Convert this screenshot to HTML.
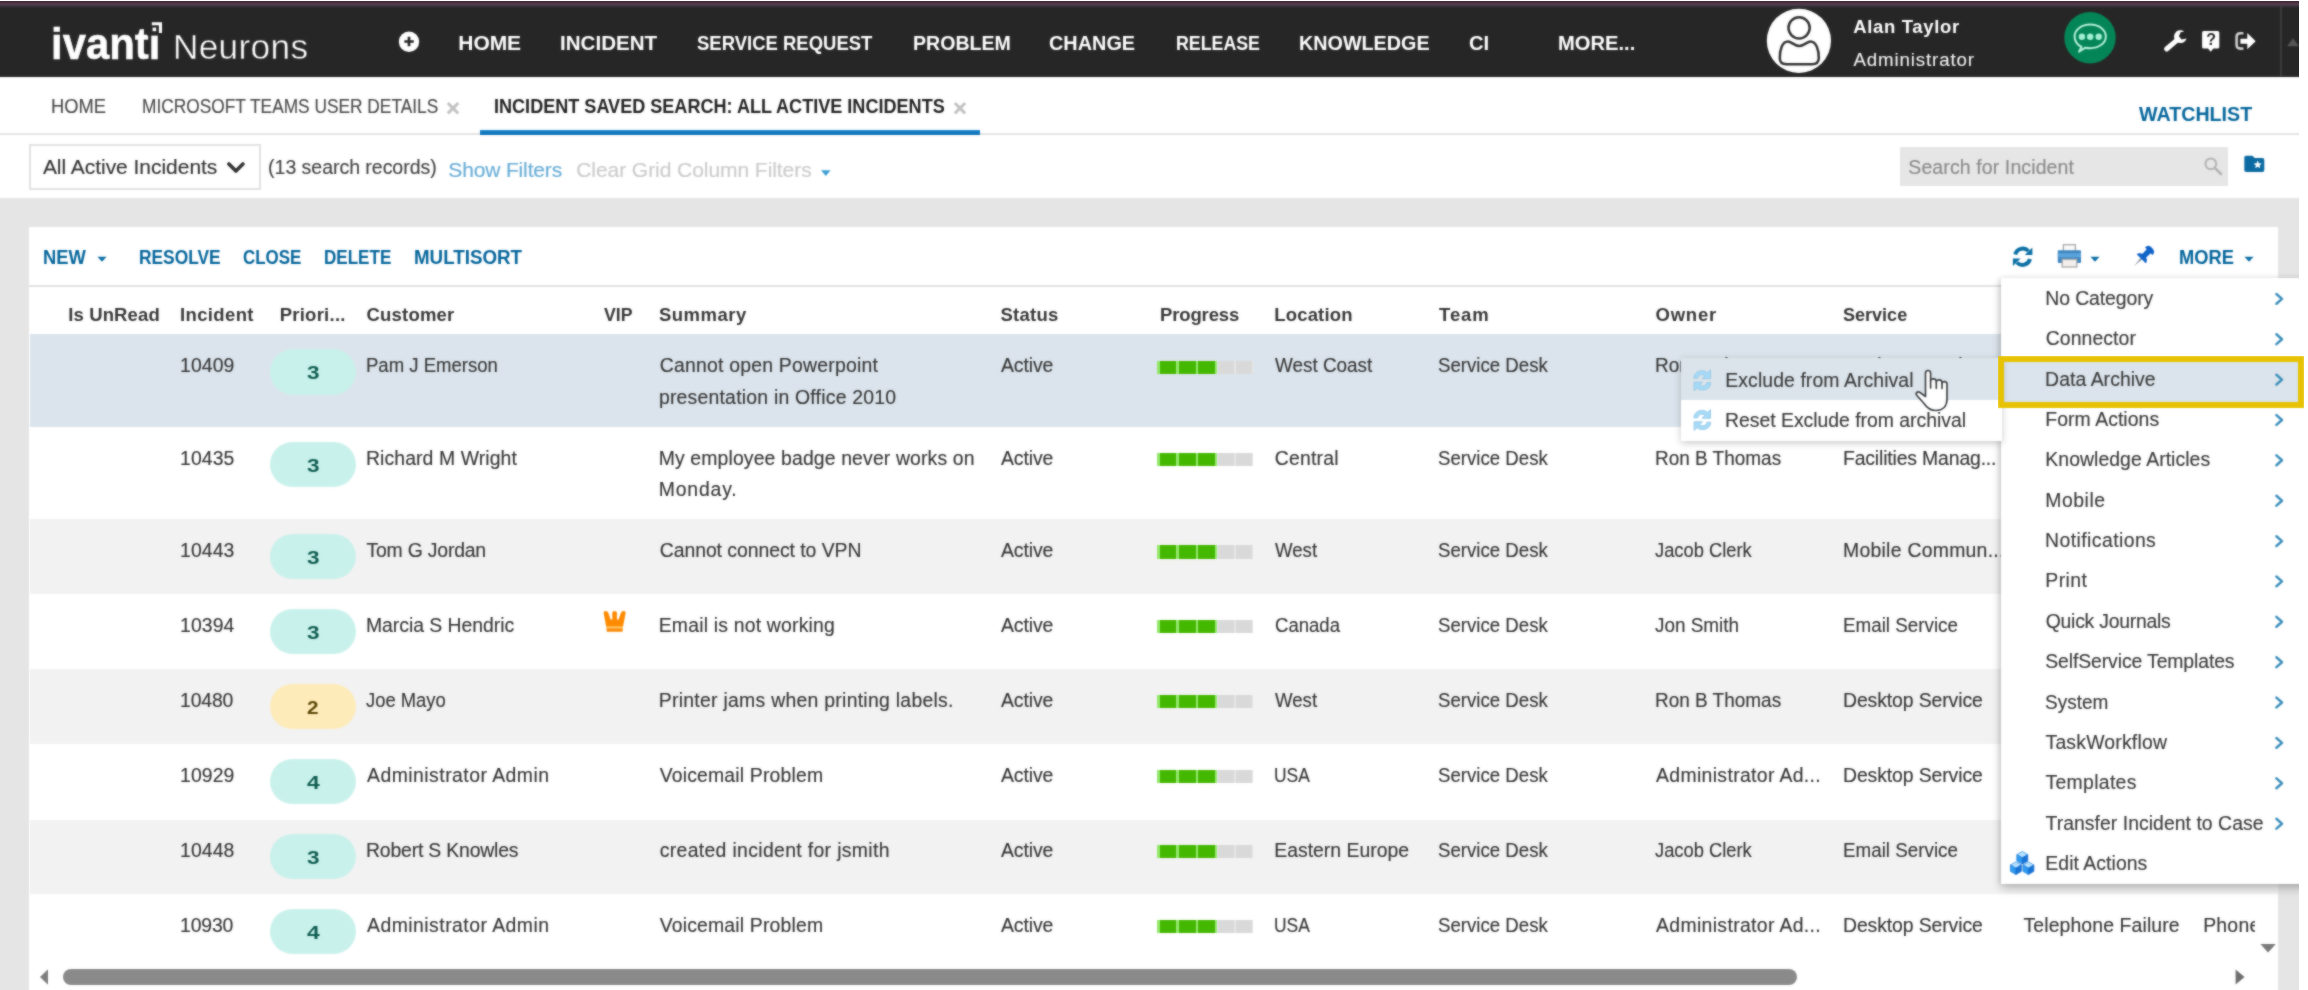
<!DOCTYPE html>
<html lang="en"><head><meta charset="utf-8"><title>Incident Saved Search: All Active Incidents</title>
<style>
*{box-sizing:border-box;margin:0;padding:0}
html,body{width:2308px;height:990px;overflow:hidden;background:#fff}
body{font-family:"Liberation Sans",sans-serif;position:relative}
.t{position:absolute;white-space:nowrap;display:block;transform-origin:0 50%}
.a{position:absolute;display:block}
#app{position:absolute;left:0;top:1px;width:2299px;height:989px;background:#e5e5e5;overflow:hidden}
#app>*, .abs{position:absolute}
#in{will-change:transform;filter:url(#soft);background:#e5e5e5}
.ov{filter:url(#soft)}
header{left:-20px;top:0;width:2339px;height:76px;background:#262626}
header .strip{left:0;top:0;width:100%;height:7px;background:linear-gradient(#40202f 0,#4e3444 25%,#523f50 55%,#2b2a30 85%,#262626 100%)}
.band{left:-20px;top:77px;width:2339px;height:120.6px;background:#fff}
.tabline{left:-20px;top:133px;width:2339px;height:2px;background:#e3e3e3}
.tabsel{left:479.8px;top:130px;width:500.3px;height:5px;background:linear-gradient(#2a90d6 0,#0f78c0 35%,#0f70b4 100%)}
.select{left:29px;top:144px;width:231.5px;height:45.5px;border:2px solid #e2e2e2;background:#fff}
.search{left:1899.8px;top:147px;width:328.4px;height:39.2px;background:#e6e6e6}
.panel{left:28.8px;top:227px;width:2249.4px;height:800px;background:#fff}
.tbline{left:28.8px;top:285px;width:2249.4px;height:2px;background:#e2e2e2}
.row{left:30.3px;width:2247.9px}
.badge{width:86px;height:45.2px;border-radius:23px;left:270px}
.pb{height:13.2px;left:1156.8px;width:96px}
.pb i{position:absolute;top:0;height:100%;display:block}
</style></head>
<body>
<svg width="0" height="0" style="position:absolute" aria-hidden="true"><filter id="soft" x="0" y="0" width="100%" height="100%" color-interpolation-filters="sRGB"><feGaussianBlur stdDeviation="0.8" result="b"/><feComposite in="SourceGraphic" in2="b" operator="arithmetic" k1="0" k2="0.45" k3="0.55" k4="0"/></filter></svg>
<div id="app">
<div class="abs" id="in" style="left:-20px;top:-21px;width:2339px;height:1030px"><div class="abs" style="left:20px;top:20px;width:2299px;height:990px">
<div class="abs" style="left:-20px;top:-20px;width:2339px;height:22px;background:#40202f"></div>
<header class="abs" style="top:1px"><div class="abs strip"></div></header>
<div class="abs band"></div><div class="abs tabline"></div><div class="abs tabsel"></div>
<div class="abs select"></div><div class="abs search"></div>
<div class="abs panel"></div><div class="abs tbline"></div>
<div class="abs" style="left:0;top:1px"><div class="a row" style="top:332.6px;height:93.4px;background:#dbe4ec"></div>
<div class="a badge" style="top:348.4px;background:#c9f1eb"></div>
<div class="a pb" style="top:359.6px;background:#e6e6e6"><i style="left:0;width:60px;background:#93e86c"></i><i style="left:3.5px;width:16.2px;background:#44b700"></i><i style="left:22.6px;width:16.2px;background:#44b700"></i><i style="left:41.7px;width:16.4px;background:#44b700"></i><i style="left:61.4px;width:15.6px;background:#d9d9d9"></i><i style="left:79.6px;width:15.6px;background:#d9d9d9"></i></div>
<div class="a row" style="top:426.0px;height:91.7px;background:#ffffff"></div>
<div class="a badge" style="top:440.8px;background:#c9f1eb"></div>
<div class="a pb" style="top:452.0px;background:#e6e6e6"><i style="left:0;width:60px;background:#93e86c"></i><i style="left:3.5px;width:16.2px;background:#44b700"></i><i style="left:22.6px;width:16.2px;background:#44b700"></i><i style="left:41.7px;width:16.4px;background:#44b700"></i><i style="left:61.4px;width:15.6px;background:#d9d9d9"></i><i style="left:79.6px;width:15.6px;background:#d9d9d9"></i></div>
<div class="a row" style="top:517.7px;height:75.2px;background:#f2f2f2"></div>
<div class="a badge" style="top:533.2px;background:#c9f1eb"></div>
<div class="a pb" style="top:544.4px;background:#e6e6e6"><i style="left:0;width:60px;background:#93e86c"></i><i style="left:3.5px;width:16.2px;background:#44b700"></i><i style="left:22.6px;width:16.2px;background:#44b700"></i><i style="left:41.7px;width:16.4px;background:#44b700"></i><i style="left:61.4px;width:15.6px;background:#d9d9d9"></i><i style="left:79.6px;width:15.6px;background:#d9d9d9"></i></div>
<div class="a row" style="top:592.9px;height:75.0px;background:#ffffff"></div>
<div class="a badge" style="top:608.1px;background:#c9f1eb"></div>
<div class="a pb" style="top:619.3px;background:#e6e6e6"><i style="left:0;width:60px;background:#93e86c"></i><i style="left:3.5px;width:16.2px;background:#44b700"></i><i style="left:22.6px;width:16.2px;background:#44b700"></i><i style="left:41.7px;width:16.4px;background:#44b700"></i><i style="left:61.4px;width:15.6px;background:#d9d9d9"></i><i style="left:79.6px;width:15.6px;background:#d9d9d9"></i></div>
<div class="a row" style="top:667.9px;height:75.3px;background:#f2f2f2"></div>
<div class="a badge" style="top:683.1px;background:#fdebb9"></div>
<div class="a pb" style="top:694.3px;background:#e6e6e6"><i style="left:0;width:60px;background:#93e86c"></i><i style="left:3.5px;width:16.2px;background:#44b700"></i><i style="left:22.6px;width:16.2px;background:#44b700"></i><i style="left:41.7px;width:16.4px;background:#44b700"></i><i style="left:61.4px;width:15.6px;background:#d9d9d9"></i><i style="left:79.6px;width:15.6px;background:#d9d9d9"></i></div>
<div class="a row" style="top:743.2px;height:75.4px;background:#ffffff"></div>
<div class="a badge" style="top:758.1px;background:#c9f1eb"></div>
<div class="a pb" style="top:769.3px;background:#e6e6e6"><i style="left:0;width:60px;background:#93e86c"></i><i style="left:3.5px;width:16.2px;background:#44b700"></i><i style="left:22.6px;width:16.2px;background:#44b700"></i><i style="left:41.7px;width:16.4px;background:#44b700"></i><i style="left:61.4px;width:15.6px;background:#d9d9d9"></i><i style="left:79.6px;width:15.6px;background:#d9d9d9"></i></div>
<div class="a row" style="top:818.6px;height:74.9px;background:#f2f2f2"></div>
<div class="a badge" style="top:833.0px;background:#c9f1eb"></div>
<div class="a pb" style="top:844.2px;background:#e6e6e6"><i style="left:0;width:60px;background:#93e86c"></i><i style="left:3.5px;width:16.2px;background:#44b700"></i><i style="left:22.6px;width:16.2px;background:#44b700"></i><i style="left:41.7px;width:16.4px;background:#44b700"></i><i style="left:61.4px;width:15.6px;background:#d9d9d9"></i><i style="left:79.6px;width:15.6px;background:#d9d9d9"></i></div>
<div class="a row" style="top:893.5px;height:75.5px;background:#ffffff"></div>
<div class="a badge" style="top:907.9px;background:#c9f1eb"></div>
<div class="a pb" style="top:919.1px;background:#e6e6e6"><i style="left:0;width:60px;background:#93e86c"></i><i style="left:3.5px;width:16.2px;background:#44b700"></i><i style="left:22.6px;width:16.2px;background:#44b700"></i><i style="left:41.7px;width:16.4px;background:#44b700"></i><i style="left:61.4px;width:15.6px;background:#d9d9d9"></i><i style="left:79.6px;width:15.6px;background:#d9d9d9"></i></div></div>
<nav><span class="t" style="left:51.34px;top:19px;font-size:44px;line-height:49px;font-weight:700;color:#ffffff;transform:scaleX(0.9517);-webkit-text-stroke:0.5px #fff;">ivanti</span>
<span class="t" style="left:172.90px;top:27px;font-size:35.3px;line-height:39px;color:#ffffff;letter-spacing:0.306px;-webkit-text-stroke:0.45px #262626;">Neurons</span><span class="t" style="left:458.30px;top:31px;font-size:21px;line-height:23px;font-weight:700;color:#ffffff;letter-spacing:-0.064px;">HOME</span>
<span class="t" style="left:560.02px;top:31px;font-size:21px;line-height:23px;font-weight:700;color:#ffffff;transform:scaleX(0.9793);">INCIDENT</span>
<span class="t" style="left:697.00px;top:31px;font-size:21px;line-height:23px;font-weight:700;color:#ffffff;transform:scaleX(0.8804);">SERVICE REQUEST</span>
<span class="t" style="left:912.67px;top:31px;font-size:21px;line-height:23px;font-weight:700;color:#ffffff;transform:scaleX(0.9313);">PROBLEM</span>
<span class="t" style="left:1049.00px;top:31px;font-size:21px;line-height:23px;font-weight:700;color:#ffffff;transform:scaleX(0.9462);">CHANGE</span>
<span class="t" style="left:1175.95px;top:31px;font-size:21px;line-height:23px;font-weight:700;color:#ffffff;transform:scaleX(0.8464);">RELEASE</span>
<span class="t" style="left:1299.36px;top:31px;font-size:21px;line-height:23px;font-weight:700;color:#ffffff;transform:scaleX(0.9404);">KNOWLEDGE</span>
<span class="t" style="left:1468.50px;top:31px;font-size:21px;line-height:23px;font-weight:700;color:#ffffff;transform:scaleX(0.9620);">CI</span>
<span class="t" style="left:1558.04px;top:31px;font-size:21px;line-height:23px;font-weight:700;color:#ffffff;transform:scaleX(0.9597);">MORE...</span><span class="t" style="left:1853.30px;top:16px;font-size:18.5px;line-height:21px;font-weight:700;color:#ffffff;letter-spacing:0.643px;">Alan Taylor</span>
<span class="t" style="left:1853.50px;top:49px;font-size:18.7px;line-height:21px;color:#f4f4f4;letter-spacing:0.862px;-webkit-text-stroke:0.1px;">Administrator</span></nav>
<div><span class="t" style="left:50.55px;top:95px;font-size:19.4px;line-height:22px;color:#4a4a4a;transform:scaleX(0.9452);-webkit-text-stroke:0.15px;">HOME</span>
<span class="t" style="left:142.11px;top:95px;font-size:19.4px;line-height:22px;color:#4a4a4a;transform:scaleX(0.8926);-webkit-text-stroke:0.15px;">MICROSOFT TEAMS USER DETAILS</span>
<span class="t" style="left:494.47px;top:95px;font-size:19.4px;line-height:22px;font-weight:700;color:#222;transform:scaleX(0.9318);">INCIDENT SAVED SEARCH: ALL ACTIVE INCIDENTS</span>
<span class="t" style="left:2138.50px;top:102px;font-size:20.5px;line-height:23px;font-weight:700;color:#04659b;transform:scaleX(0.9585);">WATCHLIST</span><span class="t" style="left:42.90px;top:155px;font-size:21px;line-height:23px;color:#333;letter-spacing:-0.034px;-webkit-text-stroke:0.15px;">All Active Incidents</span>
<span class="t" style="left:268.10px;top:156px;font-size:19.5px;line-height:22px;color:#444;letter-spacing:-0.026px;-webkit-text-stroke:0.15px;">(13 search records)</span>
<span class="t" style="left:448.30px;top:158px;font-size:21px;line-height:23px;color:#68add6;letter-spacing:-0.148px;-webkit-text-stroke:0.15px;">Show Filters</span>
<span class="t" style="left:576.20px;top:158px;font-size:21px;line-height:23px;color:#cbcbcb;letter-spacing:-0.058px;-webkit-text-stroke:0.15px;">Clear Grid Column Filters</span>
<span class="t" style="left:1908.30px;top:156px;font-size:19.5px;line-height:22px;color:#8a8a8a;letter-spacing:0.108px;-webkit-text-stroke:0.15px;">Search for Incident</span></div>
<div><span class="t" style="left:43.06px;top:246px;font-size:19.5px;line-height:22px;font-weight:700;color:#04659b;transform:scaleX(0.9404);">NEW</span>
<span class="t" style="left:138.61px;top:246px;font-size:19.5px;line-height:22px;font-weight:700;color:#04659b;transform:scaleX(0.8905);">RESOLVE</span>
<span class="t" style="left:243.30px;top:246px;font-size:19.5px;line-height:22px;font-weight:700;color:#04659b;transform:scaleX(0.8695);">CLOSE</span>
<span class="t" style="left:324.23px;top:246px;font-size:19.5px;line-height:22px;font-weight:700;color:#04659b;transform:scaleX(0.8746);">DELETE</span>
<span class="t" style="left:414.04px;top:246px;font-size:19.5px;line-height:22px;font-weight:700;color:#04659b;transform:scaleX(0.9616);">MULTISORT</span>
<span class="t" style="left:2178.66px;top:246px;font-size:19.5px;line-height:22px;font-weight:700;color:#04659b;transform:scaleX(0.9375);">MORE</span><span class="t" style="left:68.20px;top:304px;font-size:18.5px;line-height:21px;font-weight:700;color:#363636;letter-spacing:0.129px;">Is UnRead</span>
<span class="t" style="left:180.00px;top:304px;font-size:18.5px;line-height:21px;font-weight:700;color:#363636;letter-spacing:0.363px;">Incident</span>
<span class="t" style="left:279.70px;top:304px;font-size:18.5px;line-height:21px;font-weight:700;color:#363636;letter-spacing:0.250px;">Priori...</span>
<span class="t" style="left:366.50px;top:304px;font-size:18.5px;line-height:21px;font-weight:700;color:#363636;letter-spacing:0.193px;">Customer</span>
<span class="t" style="left:604.20px;top:304px;font-size:18.5px;line-height:21px;font-weight:700;color:#363636;transform:scaleX(0.9566);">VIP</span>
<span class="t" style="left:658.90px;top:304px;font-size:18.5px;line-height:21px;font-weight:700;color:#363636;letter-spacing:0.495px;">Summary</span>
<span class="t" style="left:1000.50px;top:304px;font-size:18.5px;line-height:21px;font-weight:700;color:#363636;letter-spacing:0.250px;">Status</span>
<span class="t" style="left:1160.00px;top:304px;font-size:18.5px;line-height:21px;font-weight:700;color:#363636;letter-spacing:-0.131px;">Progress</span>
<span class="t" style="left:1274.30px;top:304px;font-size:18.5px;line-height:21px;font-weight:700;color:#363636;letter-spacing:0.160px;">Location</span>
<span class="t" style="left:1439.10px;top:304px;font-size:18.5px;line-height:21px;font-weight:700;color:#363636;letter-spacing:0.865px;">Team</span>
<span class="t" style="left:1655.50px;top:304px;font-size:18.5px;line-height:21px;font-weight:700;color:#363636;letter-spacing:0.783px;">Owner</span>
<span class="t" style="left:1843.30px;top:304px;font-size:18.5px;line-height:21px;font-weight:700;color:#363636;transform:scaleX(0.9749);">Service</span></div>
<div class="abs" style="left:0;top:0;width:2254.6px;height:990px;overflow:hidden"><span class="t" style="left:180.00px;top:354px;font-size:19.4px;line-height:22px;color:#363636;letter-spacing:0.091px;-webkit-text-stroke:0.15px;">10409</span>
<span class="t" style="left:307.30px;top:362px;font-size:18.5px;line-height:21px;font-weight:700;color:#0e5c50;transform:scaleX(1.2200);">3</span>
<span class="t" style="left:366.04px;top:354px;font-size:19.4px;line-height:22px;color:#363636;transform:scaleX(0.9563);-webkit-text-stroke:0.15px;">Pam J Emerson</span>
<span class="t" style="left:659.70px;top:354px;font-size:19.4px;line-height:22px;color:#363636;letter-spacing:0.226px;-webkit-text-stroke:0.15px;">Cannot open Powerpoint</span>
<span class="t" style="left:658.90px;top:386px;font-size:19.4px;line-height:22px;color:#363636;letter-spacing:0.222px;-webkit-text-stroke:0.15px;">presentation in Office 2010</span>
<span class="t" style="left:1001.00px;top:354px;font-size:19.4px;line-height:22px;color:#363636;letter-spacing:-0.104px;-webkit-text-stroke:0.15px;">Active</span>
<span class="t" style="left:1275.40px;top:354px;font-size:19.4px;line-height:22px;color:#363636;transform:scaleX(0.9744);-webkit-text-stroke:0.15px;">West Coast</span>
<span class="t" style="left:1438.30px;top:354px;font-size:19.4px;line-height:22px;color:#363636;transform:scaleX(0.9613);-webkit-text-stroke:0.15px;">Service Desk</span>
<span class="t" style="left:1655.22px;top:354px;font-size:19.4px;line-height:22px;color:#363636;transform:scaleX(0.9778);-webkit-text-stroke:0.15px;">Ron B Thomas</span>
<span class="t" style="left:1843.00px;top:354px;font-size:19.4px;line-height:22px;color:#363636;letter-spacing:-0.100px;-webkit-text-stroke:0.15px;">Desktop Service</span>
<span class="t" style="left:180.00px;top:447px;font-size:19.4px;line-height:22px;color:#363636;letter-spacing:0.091px;-webkit-text-stroke:0.15px;">10435</span>
<span class="t" style="left:307.30px;top:455px;font-size:18.5px;line-height:21px;font-weight:700;color:#0e5c50;transform:scaleX(1.2200);">3</span>
<span class="t" style="left:366.00px;top:447px;font-size:19.4px;line-height:22px;color:#363636;letter-spacing:0.098px;-webkit-text-stroke:0.15px;">Richard M Wright</span>
<span class="t" style="left:658.70px;top:447px;font-size:19.4px;line-height:22px;color:#363636;letter-spacing:0.139px;-webkit-text-stroke:0.15px;">My employee badge never works on</span>
<span class="t" style="left:658.70px;top:478px;font-size:19.4px;line-height:22px;color:#363636;letter-spacing:0.843px;-webkit-text-stroke:0.15px;">Monday.</span>
<span class="t" style="left:1001.00px;top:447px;font-size:19.4px;line-height:22px;color:#363636;letter-spacing:-0.104px;-webkit-text-stroke:0.15px;">Active</span>
<span class="t" style="left:1274.80px;top:447px;font-size:19.4px;line-height:22px;color:#363636;letter-spacing:0.200px;-webkit-text-stroke:0.15px;">Central</span>
<span class="t" style="left:1438.30px;top:447px;font-size:19.4px;line-height:22px;color:#363636;transform:scaleX(0.9613);-webkit-text-stroke:0.15px;">Service Desk</span>
<span class="t" style="left:1655.22px;top:447px;font-size:19.4px;line-height:22px;color:#363636;transform:scaleX(0.9778);-webkit-text-stroke:0.15px;">Ron B Thomas</span>
<span class="t" style="left:1843.00px;top:447px;font-size:19.4px;line-height:22px;color:#363636;letter-spacing:-0.154px;-webkit-text-stroke:0.15px;">Facilities Manag...</span>
<span class="t" style="left:180.00px;top:539px;font-size:19.4px;line-height:22px;color:#363636;letter-spacing:0.091px;-webkit-text-stroke:0.15px;">10443</span>
<span class="t" style="left:307.30px;top:547px;font-size:18.5px;line-height:21px;font-weight:700;color:#0e5c50;transform:scaleX(1.2200);">3</span>
<span class="t" style="left:366.50px;top:539px;font-size:19.4px;line-height:22px;color:#363636;letter-spacing:-0.199px;-webkit-text-stroke:0.15px;">Tom G Jordan</span>
<span class="t" style="left:659.70px;top:539px;font-size:19.4px;line-height:22px;color:#363636;letter-spacing:-0.042px;-webkit-text-stroke:0.15px;">Cannot connect to VPN</span>
<span class="t" style="left:1001.00px;top:539px;font-size:19.4px;line-height:22px;color:#363636;letter-spacing:-0.104px;-webkit-text-stroke:0.15px;">Active</span>
<span class="t" style="left:1275.40px;top:539px;font-size:19.4px;line-height:22px;color:#363636;transform:scaleX(0.9610);-webkit-text-stroke:0.15px;">West</span>
<span class="t" style="left:1438.30px;top:539px;font-size:19.4px;line-height:22px;color:#363636;transform:scaleX(0.9613);-webkit-text-stroke:0.15px;">Service Desk</span>
<span class="t" style="left:1654.50px;top:539px;font-size:19.4px;line-height:22px;color:#363636;transform:scaleX(0.9447);-webkit-text-stroke:0.15px;">Jacob Clerk</span>
<span class="t" style="left:1843.00px;top:539px;font-size:19.4px;line-height:22px;color:#363636;letter-spacing:0.270px;-webkit-text-stroke:0.15px;">Mobile Commun...</span>
<span class="t" style="left:180.00px;top:614px;font-size:19.4px;line-height:22px;color:#363636;letter-spacing:0.091px;-webkit-text-stroke:0.15px;">10394</span>
<span class="t" style="left:307.30px;top:622px;font-size:18.5px;line-height:21px;font-weight:700;color:#0e5c50;transform:scaleX(1.2200);">3</span>
<span class="t" style="left:366.00px;top:614px;font-size:19.4px;line-height:22px;color:#363636;letter-spacing:-0.034px;-webkit-text-stroke:0.15px;">Marcia S Hendric</span>
<span class="t" style="left:658.70px;top:614px;font-size:19.4px;line-height:22px;color:#363636;letter-spacing:0.198px;-webkit-text-stroke:0.15px;">Email is not working</span>
<span class="t" style="left:1001.00px;top:614px;font-size:19.4px;line-height:22px;color:#363636;letter-spacing:-0.104px;-webkit-text-stroke:0.15px;">Active</span>
<span class="t" style="left:1275.10px;top:614px;font-size:19.4px;line-height:22px;color:#363636;transform:scaleX(0.9569);-webkit-text-stroke:0.15px;">Canada</span>
<span class="t" style="left:1438.30px;top:614px;font-size:19.4px;line-height:22px;color:#363636;transform:scaleX(0.9613);-webkit-text-stroke:0.15px;">Service Desk</span>
<span class="t" style="left:1655.00px;top:614px;font-size:19.4px;line-height:22px;color:#363636;transform:scaleX(0.9750);-webkit-text-stroke:0.15px;">Jon Smith</span>
<span class="t" style="left:1843.03px;top:614px;font-size:19.4px;line-height:22px;color:#363636;transform:scaleX(0.9696);-webkit-text-stroke:0.15px;">Email Service</span>
<span class="t" style="left:180.00px;top:689px;font-size:19.4px;line-height:22px;color:#363636;letter-spacing:-0.159px;-webkit-text-stroke:0.15px;">10480</span>
<span class="t" style="left:307.30px;top:697px;font-size:18.5px;line-height:21px;font-weight:700;color:#5b4708;transform:scaleX(1.1200);">2</span>
<span class="t" style="left:365.50px;top:689px;font-size:19.4px;line-height:22px;color:#363636;transform:scaleX(0.9486);-webkit-text-stroke:0.15px;">Joe Mayo</span>
<span class="t" style="left:658.70px;top:689px;font-size:19.4px;line-height:22px;color:#363636;letter-spacing:0.278px;-webkit-text-stroke:0.15px;">Printer jams when printing labels.</span>
<span class="t" style="left:1001.00px;top:689px;font-size:19.4px;line-height:22px;color:#363636;letter-spacing:-0.104px;-webkit-text-stroke:0.15px;">Active</span>
<span class="t" style="left:1275.40px;top:689px;font-size:19.4px;line-height:22px;color:#363636;transform:scaleX(0.9610);-webkit-text-stroke:0.15px;">West</span>
<span class="t" style="left:1438.30px;top:689px;font-size:19.4px;line-height:22px;color:#363636;transform:scaleX(0.9613);-webkit-text-stroke:0.15px;">Service Desk</span>
<span class="t" style="left:1655.22px;top:689px;font-size:19.4px;line-height:22px;color:#363636;transform:scaleX(0.9778);-webkit-text-stroke:0.15px;">Ron B Thomas</span>
<span class="t" style="left:1843.00px;top:689px;font-size:19.4px;line-height:22px;color:#363636;letter-spacing:-0.100px;-webkit-text-stroke:0.15px;">Desktop Service</span>
<span class="t" style="left:180.00px;top:764px;font-size:19.4px;line-height:22px;color:#363636;letter-spacing:0.091px;-webkit-text-stroke:0.15px;">10929</span>
<span class="t" style="left:307.20px;top:772px;font-size:18.5px;line-height:21px;font-weight:700;color:#0e5c50;transform:scaleX(1.2364);">4</span>
<span class="t" style="left:367.00px;top:764px;font-size:19.4px;line-height:22px;color:#363636;letter-spacing:0.473px;-webkit-text-stroke:0.15px;">Administrator Admin</span>
<span class="t" style="left:659.70px;top:764px;font-size:19.4px;line-height:22px;color:#363636;letter-spacing:0.180px;-webkit-text-stroke:0.15px;">Voicemail Problem</span>
<span class="t" style="left:1001.00px;top:764px;font-size:19.4px;line-height:22px;color:#363636;letter-spacing:-0.104px;-webkit-text-stroke:0.15px;">Active</span>
<span class="t" style="left:1274.40px;top:764px;font-size:19.4px;line-height:22px;color:#363636;transform:scaleX(0.8989);-webkit-text-stroke:0.15px;">USA</span>
<span class="t" style="left:1438.30px;top:764px;font-size:19.4px;line-height:22px;color:#363636;transform:scaleX(0.9613);-webkit-text-stroke:0.15px;">Service Desk</span>
<span class="t" style="left:1656.00px;top:764px;font-size:19.4px;line-height:22px;color:#363636;letter-spacing:0.350px;-webkit-text-stroke:0.15px;">Administrator Ad...</span>
<span class="t" style="left:1843.00px;top:764px;font-size:19.4px;line-height:22px;color:#363636;letter-spacing:-0.100px;-webkit-text-stroke:0.15px;">Desktop Service</span>
<span class="t" style="left:180.00px;top:839px;font-size:19.4px;line-height:22px;color:#363636;letter-spacing:0.091px;-webkit-text-stroke:0.15px;">10448</span>
<span class="t" style="left:307.30px;top:847px;font-size:18.5px;line-height:21px;font-weight:700;color:#0e5c50;transform:scaleX(1.2200);">3</span>
<span class="t" style="left:366.00px;top:839px;font-size:19.4px;line-height:22px;color:#363636;letter-spacing:-0.180px;-webkit-text-stroke:0.15px;">Robert S Knowles</span>
<span class="t" style="left:659.70px;top:839px;font-size:19.4px;line-height:22px;color:#363636;letter-spacing:0.340px;-webkit-text-stroke:0.15px;">created incident for jsmith</span>
<span class="t" style="left:1001.00px;top:839px;font-size:19.4px;line-height:22px;color:#363636;letter-spacing:-0.104px;-webkit-text-stroke:0.15px;">Active</span>
<span class="t" style="left:1274.30px;top:839px;font-size:19.4px;line-height:22px;color:#363636;letter-spacing:-0.004px;-webkit-text-stroke:0.15px;">Eastern Europe</span>
<span class="t" style="left:1438.30px;top:839px;font-size:19.4px;line-height:22px;color:#363636;transform:scaleX(0.9613);-webkit-text-stroke:0.15px;">Service Desk</span>
<span class="t" style="left:1654.50px;top:839px;font-size:19.4px;line-height:22px;color:#363636;transform:scaleX(0.9447);-webkit-text-stroke:0.15px;">Jacob Clerk</span>
<span class="t" style="left:1843.03px;top:839px;font-size:19.4px;line-height:22px;color:#363636;transform:scaleX(0.9696);-webkit-text-stroke:0.15px;">Email Service</span>
<span class="t" style="left:180.00px;top:914px;font-size:19.4px;line-height:22px;color:#363636;letter-spacing:-0.159px;-webkit-text-stroke:0.15px;">10930</span>
<span class="t" style="left:307.20px;top:922px;font-size:18.5px;line-height:21px;font-weight:700;color:#0e5c50;transform:scaleX(1.2364);">4</span>
<span class="t" style="left:367.00px;top:914px;font-size:19.4px;line-height:22px;color:#363636;letter-spacing:0.473px;-webkit-text-stroke:0.15px;">Administrator Admin</span>
<span class="t" style="left:659.70px;top:914px;font-size:19.4px;line-height:22px;color:#363636;letter-spacing:0.180px;-webkit-text-stroke:0.15px;">Voicemail Problem</span>
<span class="t" style="left:1001.00px;top:914px;font-size:19.4px;line-height:22px;color:#363636;letter-spacing:-0.104px;-webkit-text-stroke:0.15px;">Active</span>
<span class="t" style="left:1274.40px;top:914px;font-size:19.4px;line-height:22px;color:#363636;transform:scaleX(0.8989);-webkit-text-stroke:0.15px;">USA</span>
<span class="t" style="left:1438.30px;top:914px;font-size:19.4px;line-height:22px;color:#363636;transform:scaleX(0.9613);-webkit-text-stroke:0.15px;">Service Desk</span>
<span class="t" style="left:1656.00px;top:914px;font-size:19.4px;line-height:22px;color:#363636;letter-spacing:0.350px;-webkit-text-stroke:0.15px;">Administrator Ad...</span>
<span class="t" style="left:1843.00px;top:914px;font-size:19.4px;line-height:22px;color:#363636;letter-spacing:-0.100px;-webkit-text-stroke:0.15px;">Desktop Service</span>
<span class="t" style="left:2023.50px;top:914px;font-size:19.4px;line-height:22px;color:#363636;letter-spacing:0.121px;-webkit-text-stroke:0.15px;">Telephone Failure</span>
<span class="t" style="left:2203.20px;top:914px;font-size:19.4px;line-height:22px;color:#363636;letter-spacing:0.229px;-webkit-text-stroke:0.15px;">Phone</span></div>
<svg class="a" style="left:146px;top:20px" width="20" height="18" viewBox="146 20 20 18" ><rect x="147" y="26" width="14" height="9.6" fill="#262626"/><path d="M151.8 22.2H162V33H158.9V25.3H151.8Z" fill="#fff"/><rect x="152.6" y="27.6" width="3.6" height="3.6" fill="#fff"/></svg>
<svg class="a" style="left:396px;top:29px" width="26" height="26" viewBox="396 29 26 26" ><circle cx="409" cy="41.7" r="10.2" fill="#fff"/><path d="M404.3 41.5H413.8M409 36.7V46.2" stroke="#262626" stroke-width="2.7" fill="none"/></svg>
<svg class="a" style="left:1764px;top:6px" width="70" height="70" viewBox="1764 6 70 70" ><circle cx="1798.9" cy="40.8" r="32.1" fill="#fff"/><circle cx="1799.1" cy="27.8" r="10.6" fill="none" stroke="#333" stroke-width="2.5"/><path d="M1788 41.5C1791.5 41.5 1794 45.9 1799.2 45.9C1804.4 45.9 1807 41.5 1810.4 41.5C1816.4 41.5 1818.8 50 1818.8 58C1818.8 62.2 1817 64.2 1812 64.2L1786.4 64.2C1781.4 64.2 1779.8 62.2 1779.8 58C1779.8 50 1782 41.5 1788 41.5Z" fill="none" stroke="#333" stroke-width="2.5" stroke-linejoin="round"/></svg>
<svg class="a" style="left:2062px;top:10px" width="56" height="56" viewBox="2062 10 56 56" ><circle cx="2090" cy="37.7" r="25.7" fill="#048557"/><path d="M2081.5 46.9C2077.2 44.6 2074.6 40.8 2074.6 36.4C2074.6 29.7 2081.6 24.6 2090.2 24.6C2098.8 24.6 2105.8 29.7 2105.8 36.4C2105.8 43.1 2098.8 48.2 2090.2 48.2C2088.5 48.2 2086.9 48 2085.4 47.7L2079 51.6Z" fill="none" stroke="#b5f0d9" stroke-width="2" stroke-linejoin="round"/><circle cx="2081.9" cy="36.7" r="3.2" fill="#a4f0d4"/><circle cx="2090.2" cy="36.7" r="3.2" fill="#a4f0d4"/><circle cx="2098.7" cy="36.7" r="3.2" fill="#a4f0d4"/></svg>
<svg class="a" style="left:2160px;top:28px" width="30" height="28" viewBox="2160 28 30 28" ><path d="M2166.6 49L2177.6 39.6" stroke="#fff" stroke-width="5" stroke-linecap="round" fill="none"/><path d="M2184.2 31.4A6.4 6.4 0 1 0 2186.6 38.4L2181.6 39.4L2178.9 36.3L2180.6 32.3Z" fill="#fff"/></svg>
<svg class="a" style="left:2200px;top:29px" width="22" height="25" viewBox="2200 29 22 25" ><path d="M2203.6 31H2217.8Q2219.3 31 2219.3 32.5V47.1Q2219.3 48.6 2217.8 48.6H2213.4L2210.7 51.8L2208 48.6H2203.6Q2202.1 48.6 2202.1 47.1V32.5Q2202.1 31 2203.6 31Z" fill="#fff"/></svg>
<span class="t" style="left:2206.3px;top:31px;font-size:16px;line-height:18px;font-weight:700;color:#262626">?</span>
<svg class="a" style="left:2232px;top:30px" width="26" height="22" viewBox="2232 30 26 22" ><path d="M2242.4 33.2H2240.4Q2236.6 33.2 2236.6 37V44.8Q2236.6 48.6 2240.4 48.6H2242.4" fill="none" stroke="#cfcfcf" stroke-width="2.6" stroke-linecap="round"/><path d="M2240.4 38.7H2247.3V33L2255.7 41.2L2247.3 49.2V43.8H2240.4Z" fill="#fff"/></svg>
<div class="abs" style="left:2279.6px;top:6px;width:2.4px;height:70px;background:#3b3b3b"></div>
<svg class="a" style="left:2285px;top:36px" width="14" height="12" viewBox="2285 36 14 12" ><path d="M2287 46.3L2293 38.2L2299 46.3Z" fill="#555"/></svg>
<svg class="a" style="left:444.7px;top:100px" width="16" height="16" viewBox="444.7 100 16 16" ><path d="M447.5 103L457.9 113.4M457.9 103L447.5 113.4" stroke="#c2c2c2" stroke-width="3" fill="none"/></svg>
<svg class="a" style="left:951.9px;top:100px" width="16" height="16" viewBox="951.9 100 16 16" ><path d="M954.6999999999999 103L965.1 113.4M965.1 103L954.6999999999999 113.4" stroke="#c2c2c2" stroke-width="3" fill="none"/></svg>
<svg class="a" style="left:224px;top:159px" width="24" height="18" viewBox="224 159 24 18" ><path d="M228.9 164L235.9 171L242.9 164" fill="none" stroke="#333" stroke-width="3.6" stroke-linecap="round" stroke-linejoin="round"/></svg>
<svg class="a" style="left:819px;top:168px" width="14" height="10" viewBox="819 168 14 10" ><path d="M821 170.3H830.6L825.8 176Z" fill="#3d9fd1"/></svg>
<svg class="a" style="left:2202px;top:155px" width="22" height="22" viewBox="2202 155 22 22" ><circle cx="2210.8" cy="163.8" r="5.4" fill="none" stroke="#b3b3b3" stroke-width="2"/><path d="M2214.8 167.9L2221 174" stroke="#b3b3b3" stroke-width="2.6" stroke-linecap="round"/></svg>
<svg class="a" style="left:2242px;top:153px" width="25" height="21" viewBox="2242 153 25 21" ><path d="M2246 155.7H2251.6Q2252.8 155.7 2253.6 156.8L2254.4 158H2262.4Q2264.3 158 2264.3 159.9V170.1Q2264.3 172 2262.4 172H2246.2Q2244.3 172 2244.3 170.1V157.4Q2244.3 155.7 2246 155.7Z" fill="#0a6aa1"/><path d="M2257.7 160.6L2258.9 163.2L2261.7 163.5L2259.6 165.4L2260.2 168.2L2257.7 166.8L2255.2 168.2L2255.8 165.4L2253.7 163.5L2256.5 163.2Z" fill="#fff"/></svg>
<svg class="a" style="left:94.5px;top:254px" width="14" height="10" viewBox="94.5 254 14 10" ><path d="M96.9 256.7H106.1L101.5 261.7Z" fill="#0b6fa4"/></svg>
<svg class="a" style="left:2088px;top:254px" width="14" height="10" viewBox="2088 254 14 10" ><path d="M2090.4 256.7H2099.6L2095 261.7Z" fill="#0b6fa4"/></svg>
<svg class="a" style="left:2241.9px;top:254px" width="14" height="10" viewBox="2241.9 254 14 10" ><path d="M2244.3 256.7H2253.5L2248.9 261.7Z" fill="#0b6fa4"/></svg>
<svg class="a" style="left:2010px;top:245px" width="26" height="24" viewBox="2010 245 26 24" ><path d="M2015.3 254.5A7.7 7.7 0 0 1 2028.4 251" fill="none" stroke="#0b6fa4" stroke-width="3.9"/><path d="M2032.4 247.4V255H2024.8Z" fill="#0b6fa4"/><path d="M2030 259A7.7 7.7 0 0 1 2016.9 262.5" fill="none" stroke="#0b6fa4" stroke-width="3.9"/><path d="M2012.9 266.1V258.5H2020.5Z" fill="#0b6fa4"/></svg>
<svg class="a" style="left:2055px;top:242px" width="30" height="28" viewBox="2055 242 30 28" ><rect x="2063.4" y="244.7" width="12" height="7" fill="#fafafa" stroke="#a9a9a9" stroke-width="1.3"/><rect x="2057.8" y="250.2" width="23.2" height="12.8" rx="1" fill="#3f86bf"/><rect x="2057.8" y="253.2" width="23.2" height="4.2" fill="#5aa3dc"/><rect x="2062.2" y="259.4" width="14.6" height="7.6" fill="#f3efec" stroke="#a9a9a9" stroke-width="1.3"/></svg>
<svg class="a" style="left:2131px;top:243px" width="26" height="26" viewBox="2131 243 26 26" ><g transform="translate(2134 266) rotate(45)"><path d="M0 0L-0.9 -9H0.9Z" fill="#8d99a6"/><rect x="-0.9" y="-11" width="1.8" height="3" fill="#8d99a6"/><path d="M-6.4 -10.2C-6.4 -13 -3.6 -14.2 -2.6 -14.6L-2.9 -21.2H2.9L2.6 -14.6C3.6 -14.2 6.4 -13 6.4 -10.2Z" fill="#0f62c9"/><path d="M-5.2 -20.8Q-5.6 -25.6 0 -25.6Q5.6 -25.6 5.2 -20.8Z" fill="#0f62c9"/></g></svg>
<svg class="a" style="left:602px;top:609px" width="26" height="25" viewBox="602 609 26 25" ><path d="M606.2 626.8L603.7 613.2Q603.4 611 605.6 611Q607.8 611 608.4 613L610.6 619.6H612.4L612.2 613.2Q612.2 611 614.6 611Q617 611 617 613.2L616.8 619.6H618.6L620.9 613Q621.5 611 623.7 611Q625.9 611 625.6 613.2L623 626.8Z" fill="#ff8a00"/><rect x="606.2" y="626.6" width="16.8" height="2.2" fill="#ffc257"/><rect x="606.6" y="628.6" width="16.1" height="3.2" rx="0.8" fill="#f98a0a"/></svg>
<div class="abs" style="left:62.5px;top:968.6px;width:1734px;height:16.6px;border-radius:8.3px;background:#8a8a8a"></div>
<svg class="a" style="left:38px;top:966px" width="12" height="22" viewBox="38 966 12 22" ><path d="M40 977L48 969.2V984.8Z" fill="#7d7d7d"/></svg>
<svg class="a" style="left:2233px;top:966px" width="14" height="22" viewBox="2233 966 14 22" ><path d="M2244.6 977L2235.6 969.6V984.4Z" fill="#6e6e6e"/></svg>
<svg class="a" style="left:2258px;top:942px" width="20" height="13" viewBox="2258 942 20 13" ><path d="M2260.4 944H2275.8L2268.1 952.6Z" fill="#7a7a7a"/></svg>
<div class="abs" style="left:2001.3px;top:278px;width:330px;height:605.8px;background:#fff;box-shadow:0 4px 9px rgba(0,0,0,.26),-2px 0 4px rgba(0,0,0,.08)"></div>
<div class="abs" style="left:2001.3px;top:360px;width:330px;height:44px;background:#dbe4ec"></div>
<div class="abs" style="left:1680.8px;top:358.4px;width:320.8px;height:82.6px;background:#fff;box-shadow:0 2px 7px rgba(0,0,0,.22)"></div>
<div class="abs" style="left:1680.8px;top:358.4px;width:320.8px;height:41.6px;background:#dbe4eb"></div>
<span class="t" style="left:2045.30px;top:287px;font-size:19.4px;line-height:22px;color:#3a3a3a;letter-spacing:-0.096px;-webkit-text-stroke:0.15px;">No Category</span>
<span class="t" style="left:2045.70px;top:327px;font-size:19.4px;line-height:22px;color:#3a3a3a;letter-spacing:0.099px;-webkit-text-stroke:0.15px;">Connector</span>
<span class="t" style="left:2045.10px;top:368px;font-size:19.4px;line-height:22px;color:#3a3a3a;letter-spacing:0.053px;-webkit-text-stroke:0.15px;">Data Archive</span>
<span class="t" style="left:2045.30px;top:408px;font-size:19.4px;line-height:22px;color:#3a3a3a;letter-spacing:0.062px;-webkit-text-stroke:0.15px;">Form Actions</span>
<span class="t" style="left:2045.30px;top:448px;font-size:19.4px;line-height:22px;color:#3a3a3a;letter-spacing:0.058px;-webkit-text-stroke:0.15px;">Knowledge Articles</span>
<span class="t" style="left:2045.30px;top:489px;font-size:19.4px;line-height:22px;color:#3a3a3a;letter-spacing:0.533px;-webkit-text-stroke:0.15px;">Mobile</span>
<span class="t" style="left:2045.10px;top:529px;font-size:19.4px;line-height:22px;color:#3a3a3a;letter-spacing:0.423px;-webkit-text-stroke:0.15px;">Notifications</span>
<span class="t" style="left:2045.30px;top:569px;font-size:19.4px;line-height:22px;color:#3a3a3a;letter-spacing:0.429px;-webkit-text-stroke:0.15px;">Print</span>
<span class="t" style="left:2045.70px;top:610px;font-size:19.4px;line-height:22px;color:#3a3a3a;letter-spacing:-0.242px;-webkit-text-stroke:0.15px;">Quick Journals</span>
<span class="t" style="left:2045.30px;top:650px;font-size:19.4px;line-height:22px;color:#3a3a3a;letter-spacing:-0.112px;-webkit-text-stroke:0.15px;">SelfService Templates</span>
<span class="t" style="left:2045.30px;top:691px;font-size:19.4px;line-height:22px;color:#3a3a3a;transform:scaleX(0.9796);-webkit-text-stroke:0.15px;">System</span>
<span class="t" style="left:2045.50px;top:731px;font-size:19.4px;line-height:22px;color:#3a3a3a;letter-spacing:0.197px;-webkit-text-stroke:0.15px;">TaskWorkflow</span>
<span class="t" style="left:2045.50px;top:771px;font-size:19.4px;line-height:22px;color:#3a3a3a;letter-spacing:0.315px;-webkit-text-stroke:0.15px;">Templates</span>
<span class="t" style="left:2045.50px;top:812px;font-size:19.4px;line-height:22px;color:#3a3a3a;letter-spacing:0.041px;-webkit-text-stroke:0.15px;">Transfer Incident to Case</span>
<span class="t" style="left:2045.30px;top:852px;font-size:19.4px;line-height:22px;color:#3a3a3a;letter-spacing:0.064px;-webkit-text-stroke:0.15px;">Edit Actions</span>
<span class="t" style="left:1725.30px;top:369px;font-size:19.4px;line-height:22px;color:#3a3a3a;letter-spacing:0.090px;-webkit-text-stroke:0.15px;">Exclude from Archival</span>
<span class="t" style="left:1725.10px;top:409px;font-size:19.4px;line-height:22px;color:#3a3a3a;letter-spacing:-0.019px;-webkit-text-stroke:0.15px;">Reset Exclude from archival</span>
<svg class="a" style="left:2272px;top:291px" width="14" height="16" viewBox="2272 291 14 16" ><path d="M2276.4 294.0L2282 298.9L2276.4 303.8" fill="none" stroke="#3d8fbb" stroke-width="2.5" stroke-linecap="round" stroke-linejoin="round"/></svg>
<svg class="a" style="left:2272px;top:331px" width="14" height="16" viewBox="2272 331 14 16" ><path d="M2276.4 334.3L2282 339.2L2276.4 344.1" fill="none" stroke="#3d8fbb" stroke-width="2.5" stroke-linecap="round" stroke-linejoin="round"/></svg>
<svg class="a" style="left:2272px;top:372px" width="14" height="16" viewBox="2272 372 14 16" ><path d="M2276.4 374.7L2282 379.6L2276.4 384.5" fill="none" stroke="#3d8fbb" stroke-width="2.5" stroke-linecap="round" stroke-linejoin="round"/></svg>
<svg class="a" style="left:2272px;top:412px" width="14" height="16" viewBox="2272 412 14 16" ><path d="M2276.4 415.1L2282 420.0L2276.4 424.9" fill="none" stroke="#3d8fbb" stroke-width="2.5" stroke-linecap="round" stroke-linejoin="round"/></svg>
<svg class="a" style="left:2272px;top:452px" width="14" height="16" viewBox="2272 452 14 16" ><path d="M2276.4 455.4L2282 460.3L2276.4 465.2" fill="none" stroke="#3d8fbb" stroke-width="2.5" stroke-linecap="round" stroke-linejoin="round"/></svg>
<svg class="a" style="left:2272px;top:493px" width="14" height="16" viewBox="2272 493 14 16" ><path d="M2276.4 495.8L2282 500.7L2276.4 505.6" fill="none" stroke="#3d8fbb" stroke-width="2.5" stroke-linecap="round" stroke-linejoin="round"/></svg>
<svg class="a" style="left:2272px;top:533px" width="14" height="16" viewBox="2272 533 14 16" ><path d="M2276.4 536.2L2282 541.1L2276.4 546.0" fill="none" stroke="#3d8fbb" stroke-width="2.5" stroke-linecap="round" stroke-linejoin="round"/></svg>
<svg class="a" style="left:2272px;top:573px" width="14" height="16" viewBox="2272 573 14 16" ><path d="M2276.4 576.5L2282 581.4L2276.4 586.3" fill="none" stroke="#3d8fbb" stroke-width="2.5" stroke-linecap="round" stroke-linejoin="round"/></svg>
<svg class="a" style="left:2272px;top:614px" width="14" height="16" viewBox="2272 614 14 16" ><path d="M2276.4 616.9L2282 621.8L2276.4 626.7" fill="none" stroke="#3d8fbb" stroke-width="2.5" stroke-linecap="round" stroke-linejoin="round"/></svg>
<svg class="a" style="left:2272px;top:654px" width="14" height="16" viewBox="2272 654 14 16" ><path d="M2276.4 657.3L2282 662.2L2276.4 667.1" fill="none" stroke="#3d8fbb" stroke-width="2.5" stroke-linecap="round" stroke-linejoin="round"/></svg>
<svg class="a" style="left:2272px;top:695px" width="14" height="16" viewBox="2272 695 14 16" ><path d="M2276.4 697.6L2282 702.5L2276.4 707.4" fill="none" stroke="#3d8fbb" stroke-width="2.5" stroke-linecap="round" stroke-linejoin="round"/></svg>
<svg class="a" style="left:2272px;top:735px" width="14" height="16" viewBox="2272 735 14 16" ><path d="M2276.4 738.0L2282 742.9L2276.4 747.8" fill="none" stroke="#3d8fbb" stroke-width="2.5" stroke-linecap="round" stroke-linejoin="round"/></svg>
<svg class="a" style="left:2272px;top:775px" width="14" height="16" viewBox="2272 775 14 16" ><path d="M2276.4 778.4L2282 783.3L2276.4 788.2" fill="none" stroke="#3d8fbb" stroke-width="2.5" stroke-linecap="round" stroke-linejoin="round"/></svg>
<svg class="a" style="left:2272px;top:816px" width="14" height="16" viewBox="2272 816 14 16" ><path d="M2276.4 818.8L2282 823.7L2276.4 828.6" fill="none" stroke="#3d8fbb" stroke-width="2.5" stroke-linecap="round" stroke-linejoin="round"/></svg>
<svg class="a" style="left:2008px;top:848px" width="28" height="29" viewBox="2008 848 28 29" ><path d="M2022.3 851.5L2027.7558 854.65L2022.3 857.8L2016.8442 854.65Z" fill="#b6e2ff" stroke="#3c8fe0" stroke-width="0.8" stroke-linejoin="round"/><path d="M2016.8442 854.65L2022.3 857.8L2022.3 864.0999999999999L2016.8442 860.9499999999999Z" fill="#2f9bf0" stroke="#2a84dc" stroke-width="0.8" stroke-linejoin="round"/><path d="M2027.7558 854.65L2022.3 857.8L2022.3 864.0999999999999L2027.7558 860.9499999999999Z" fill="#1673d6" stroke="#1a6fd0" stroke-width="0.8" stroke-linejoin="round"/><path d="M2015.9 861.9000000000001L2021.3558 865.0500000000001L2015.9 868.2L2010.4442000000001 865.0500000000001Z" fill="#b6e2ff" stroke="#3c8fe0" stroke-width="0.8" stroke-linejoin="round"/><path d="M2010.4442000000001 865.0500000000001L2015.9 868.2L2015.9 874.5L2010.4442000000001 871.35Z" fill="#2f9bf0" stroke="#2a84dc" stroke-width="0.8" stroke-linejoin="round"/><path d="M2021.3558 865.0500000000001L2015.9 868.2L2015.9 874.5L2021.3558 871.35Z" fill="#1673d6" stroke="#1a6fd0" stroke-width="0.8" stroke-linejoin="round"/><path d="M2028.4 861.9000000000001L2033.8558 865.0500000000001L2028.4 868.2L2022.9442000000001 865.0500000000001Z" fill="#b6e2ff" stroke="#3c8fe0" stroke-width="0.8" stroke-linejoin="round"/><path d="M2022.9442000000001 865.0500000000001L2028.4 868.2L2028.4 874.5L2022.9442000000001 871.35Z" fill="#2f9bf0" stroke="#2a84dc" stroke-width="0.8" stroke-linejoin="round"/><path d="M2033.8558 865.0500000000001L2028.4 868.2L2028.4 874.5L2033.8558 871.35Z" fill="#1673d6" stroke="#1a6fd0" stroke-width="0.8" stroke-linejoin="round"/></svg>
<svg class="a" style="left:1690px;top:367px" width="24" height="26" viewBox="1690 367 24 26" ><path d="M1693.8999999999999 378.2C1693.8999999999999 370.9 1703.3 368.9 1707.5 372.79999999999995L1710.5 370.0V378.59999999999997H1702.1L1704.8999999999999 375.79999999999995C1702.7 373.59999999999997 1698.1 374.2 1697.7 378.2Z" fill="#a6dbf7" stroke="#94c6e6" stroke-width="0.9" stroke-linejoin="round"/><path d="M1710.7 382.59999999999997C1710.7 389.9 1701.3 391.9 1697.1 388.0L1694.1 390.79999999999995V382.2H1702.5L1699.7 385.0C1701.8999999999999 387.2 1706.5 386.59999999999997 1706.8999999999999 382.59999999999997Z" fill="#a6dbf7" stroke="#94c6e6" stroke-width="0.9" stroke-linejoin="round"/></svg>
<svg class="a" style="left:1690px;top:407px" width="24" height="26" viewBox="1690 407 24 26" ><path d="M1693.8999999999999 417.8C1693.8999999999999 410.5 1703.3 408.5 1707.5 412.4L1710.5 409.6V418.2H1702.1L1704.8999999999999 415.4C1702.7 413.2 1698.1 413.8 1697.7 417.8Z" fill="#a6dbf7" stroke="#94c6e6" stroke-width="0.9" stroke-linejoin="round"/><path d="M1710.7 422.2C1710.7 429.5 1701.3 431.5 1697.1 427.6L1694.1 430.4V421.8H1702.5L1699.7 424.6C1701.8999999999999 426.8 1706.5 426.2 1706.8999999999999 422.2Z" fill="#a6dbf7" stroke="#94c6e6" stroke-width="0.9" stroke-linejoin="round"/></svg>
</div></div></div>
<div class="a ov" style="left:1998px;top:356.2px;width:305.7px;height:52.3px;border:6.6px solid #e6c200"></div><svg class="a ov" style="left:1912px;top:366px" width="40" height="48" viewBox="1912 366 40 48"><path d="M1925.5 396.5L1925.5 373.2C1925.5 369.6 1930.6 369.6 1930.6 373.2L1930.6 381C1930.6 378 1936.3 378 1936.3 381.3L1936.3 382C1936.3 379 1942 379.3 1942 382.5L1942 383.3C1942 380.8 1947 381 1947 384L1947 399C1947 407 1942 410.5 1936 410.5C1930 410.5 1927 408 1924 403.5L1917 395.5C1915 393 1917.5 391 1920 392.5Z" fill="#fff" stroke="#3f4245" stroke-width="1.7" stroke-linejoin="round"/><path d="M1930.6 381V388M1936.3 382V388.3M1942 383.3V388.5" fill="none" stroke="#3f4245" stroke-width="1.7" stroke-linecap="round"/></svg>
</body></html>
